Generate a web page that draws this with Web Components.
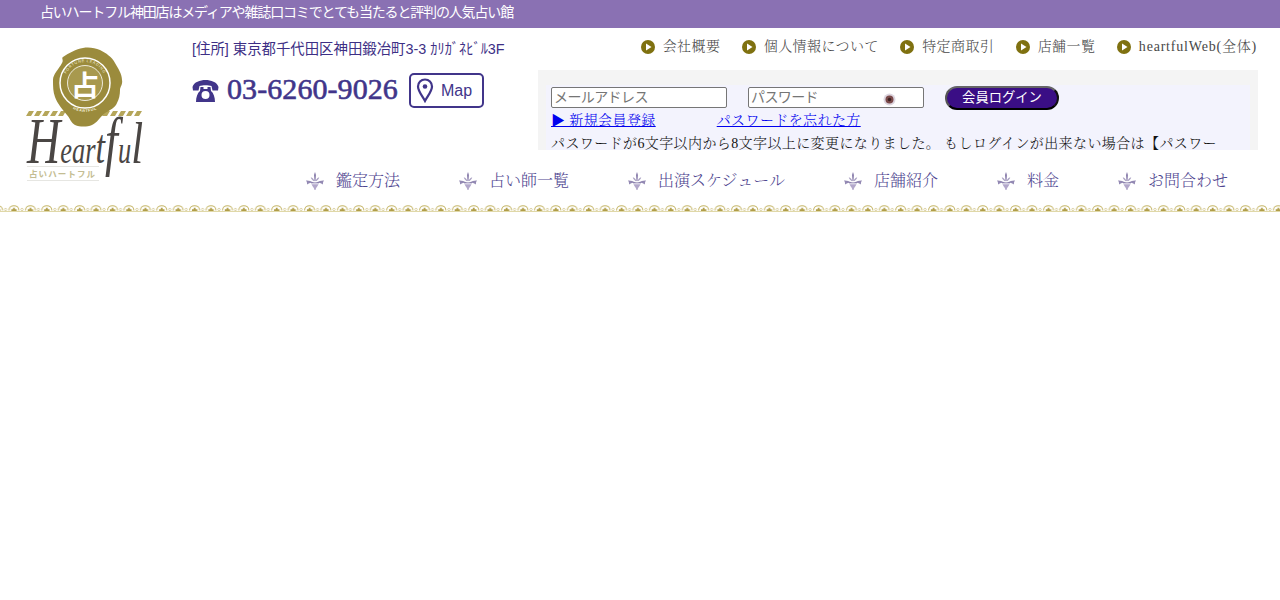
<!DOCTYPE html>
<html lang="ja"><head><meta charset="utf-8"><title>占いハートフル</title>
<style>
html,body{margin:0;padding:0;background:#fff;}
body{font-family:"Liberation Serif","Noto Serif CJK JP",serif;}
</style></head><body>
<site-page></site-page>
<script>
function def(name, html){
  customElements.define(name, class extends HTMLElement{
    constructor(){super();this.attachShadow({mode:'open'}).innerHTML=html;}
  });
}
const SERIF='"Liberation Serif","Noto Serif CJK JP",serif';
const SANS='"Liberation Sans","Noto Sans CJK JP",sans-serif';

def('top-bar',`<style>:host{display:block;height:28px;background:#8a71b3;color:#fff;font:14px/25px ${SANS};letter-spacing:-1.16px;padding-left:40px;}</style><slot></slot>`);

def('site-logo',`<style>:host{display:block;width:118px;height:136px;}svg{display:block;overflow:visible}</style>
<svg width="118" height="136" viewBox="0 0 118 136">
 <defs>
  <path id="ringTop" d="M38 35a21 21 0 0 1 42 0"/>
  <path id="ringBot" d="M34 39a25 25 0 0 0 50 0"/>
 </defs>
 <g fill="#b5a65a">
  ${[0,8,16,24,32,76,84,92,100,108].map(x=>`<path d="M${x+3} 63h5l-3 5h-5z"/>`).join('')}
 </g>
 <path d="M57 0C63-1 69 0 74 2C80 5 86 9 89 15C92 20 96 26 96 32C97 36 94 39 94 42C94 47 93 51 91 55C89 60 84 62 79 65C74 69 71 75 66 77C61 79 54 79 49 77C45 75 44 70 41 67C37 62 31 55 29 49C27 44 27 38 27 32C27 26 33 21 36 15C38 12 35 10 37 9C43 5 50 1 57 0Z" fill="#9b8b3c"/>
 <circle cx="59" cy="35" r="25" fill="none" stroke="#fff" stroke-width="1.500"/>
 <circle cx="59" cy="35" r="17.500" fill="#a8994e" stroke="#fff" stroke-width=".8"/>
 <text font-family="Liberation Sans" font-size="3.800" fill="#f4f0da" letter-spacing=".7"><textPath href="#ringTop" startOffset="50%" text-anchor="middle">FORTUNE LEADING</textPath></text>
 <text font-family="Liberation Sans" font-size="3.800" font-weight="700" fill="#f4f0da" letter-spacing=".6"><textPath href="#ringBot" startOffset="50%" text-anchor="middle">HEARTFUL</textPath></text>
 <text x="59" y="48" text-anchor="middle" font-family='"Noto Sans CJK JP",sans-serif' font-size="28" font-weight="700" fill="#fff">占</text>
 <text transform="translate(1,115) scale(1,1.200)" font-family="Liberation Serif" font-style="italic" font-size="31" fill="#4a4644" textLength="116" lengthAdjust="spacingAndGlyphs"><tspan font-size="54">H</tspan>ear<tspan font-size="40">t</tspan><tspan font-size="54">f</tspan>u<tspan font-size="50">l</tspan></text>
 <path d="M1 118h72v1H1zM1 132h72v1H1z" fill="#e6e6e2"/>
 <text x="3" y="129" font-family='"Noto Sans CJK JP",sans-serif' font-size="8.500" font-weight="700" fill="#c4bd92" letter-spacing="1.100">占いハートフル</text>
</svg>`);

def('shop-info',`<style>
:host{display:block;width:346px;color:#3d2f85;}
.addr{font:14.4px/20px ${SANS};margin:11px 0 0;white-space:nowrap}
.row{display:flex;align-items:center;margin-top:14px;height:35px}
.tel{font:400 30px/35px ${SERIF};-webkit-text-stroke:.6px #41358a;color:#41358a;margin-left:8px;padding-bottom:4px;white-space:nowrap;letter-spacing:.08px}
svg{display:block;flex:none}
.map{box-sizing:border-box;margin-left:11px;width:75px;height:35px;border:2px solid #41358a;border-radius:5px;display:flex;align-items:center;padding-left:5px;gap:7px;font:16px ${SANS};color:#41358a;background:#fff}
</style>
<div class="addr">[住所] 東京都千代田区神田鍛冶町3-3 ｶﾘｶﾞﾈﾋﾞﾙ3F</div>
<div class="row">
<svg width="27" height="22" viewBox="0 0 27 22"><path fill="#41358a" fill-rule="evenodd" d="M.5 7C2 2 8 0 13.500 0S25 2 26.500 7L26 10.500H20.500L19.500 6C16.500 5 10.500 5 7.500 6L6.500 10.500H1zM8.500 7h3v2h4V7h3l.5 4C21.500 13 23 17 23 22H4C4 17 5.500 13 8 11zM13.500 11a4 4 0 1 0 0 8 4 4 0 0 0 0-8z"/></svg>
<span class="tel">03-6260-9026</span>
<span class="map"><svg width="18" height="25" viewBox="0 0 18 25"><path fill="none" stroke="#41358a" stroke-width="2.200" d="M9 1.500c4 0 7 3 7 7 0 4.500-4 9-7 14.500C6 17.500 2 13 2 8.500c0-4 3-7 7-7z"/><circle cx="9" cy="8.500" r="2.300" fill="#41358a"/></svg>Map</span>
</div>`);

def('top-link',`<style>
:host{display:flex;align-items:center;gap:8px;font:300 14px/18px ${SERIF};letter-spacing:.4px;color:#484848;white-space:nowrap}
svg{display:block}
</style><svg width="14" height="14" viewBox="0 0 14 14"><circle cx="7" cy="7" r="7" fill="#7f7110"/><path d="M5 3.500 10.500 7 5 10.500z" fill="#fff"/></svg><slot></slot>`);

def('top-links',`<style>:host{display:flex;justify-content:flex-end;gap:21.500px;height:18px;margin-top:10px;margin-right:1px}</style><slot></slot>`);

def('login-box',`<style>
:host{display:block;box-sizing:border-box;height:80px;margin-top:14px;background:#f4f4f4;padding:15px 8px 0;overflow:hidden;font:300 14px/20px ${SERIF};letter-spacing:.4px;color:#111}
.in{background:#f3f3fd;padding:0 5px;height:100px}
.r1{display:flex;align-items:center;height:25px}
.f{position:relative;box-sizing:border-box;width:176px;height:21px;border:1px solid #767676;border-radius:2px;background:#fff;color:#757575;font:14px/19px ${SANS};padding-left:2px;letter-spacing:-.6px}
.f+.f{margin-left:21px}
.eye{position:absolute;left:134px;top:5px}
.btn{box-sizing:border-box;margin-left:21px;width:114px;height:24px;border-radius:12px;border:2px solid;border-color:#666 #111 #000 #555;background:#3a0e85;color:#fff;font:13.300px/20px ${SANS};letter-spacing:0;text-align:center}
.r2{display:flex;height:20px;margin-top:1px}
a{color:#00e;text-decoration:underline}
.p{margin:3px 0 0;white-space:nowrap}
</style>
<div class="in">
<div class="r1"><div class="f">メールアドレス</div><div class="f">パスワード<svg class="eye" width="13" height="13" viewBox="0 0 13 13"><circle cx="6.500" cy="6.500" r="6" fill="#ddd6e0"/><circle cx="6.500" cy="6.500" r="4" fill="#7a4a4a"/><circle cx="6.500" cy="6.500" r="1.700" fill="#3a1f1f"/></svg></div><div class="btn">会員ログイン</div></div>
<div class="r2"><a href="#">▶ 新規会員登録</a><a href="#" style="margin-left:61px">パスワードを忘れた方</a></div>
<p class="p">パスワードが6文字以内から8文字以上に変更になりました。 もしログインが出来ない場合は【パスワー</p>
</div>`);

def('nav-item',`<style>
:host{display:flex;align-items:center;gap:12px;font:300 16px/24px ${SERIF};color:#4f4690;white-space:nowrap}
svg{display:block}
</style><svg width="18" height="18" viewBox="0 0 18 18"><g fill="#6f6199"><path d="M9 0c.5 1.500 1 3 .7 4.500L9.400 9h-.8L8.300 4.500C8 3 8.500 1.500 9 0z"/><path d="M8.500 9C7.500 7 6.500 5.500 4.800 5.300 5 7 6.500 8.500 8 9.300zM9.500 9c1-2 2-3.500 3.700-3.700C13 7 11.500 8.500 10 9.300z" fill-opacity=".6"/><path d="M0 8.500c2.500-.3 5 .8 7.500 1.700v.5C5 10.700 2.500 11 1 12.500c.2-1.500 0-2.800-1-4zM18 8.500c-2.500-.3-5 .8-7.500 1.700v.5c2.500 0 5 .3 6.500 1.800-.2-1.500 0-2.800 1-4z" fill-opacity=".75"/><path d="M5 10.500h8v.8H5z"/></g><path d="M5.500 12c1.200.4 5.800.4 7 0-.3 2-2.500 3-3 6h-1c-.5-3-2.700-4-3-6z" fill="#b3a8cb"/></svg><slot></slot>`);

def('main-nav',`<style>:host{display:flex;justify-content:flex-end;gap:59px;padding:0 30px 0 0;height:24px;margin-top:19px}</style><slot></slot>`);

def('lace-border',`<style>:host{display:block;height:7px;margin-top:12px}svg{display:block;width:100%;height:7px}</style>
<svg height="7"><defs><pattern id="l" width="16.420" height="7" patternUnits="userSpaceOnUse" patternTransform="translate(7.500 0)">
<path d="M1.500 5.500C1.500 2.500 3.800 .7 6.500 .7S11.500 2.500 11.500 5.500" fill="none" stroke="#c4b464" stroke-width="1"/>
<path d="M3.800 4.200h5.400v1.800H3.800zM5.600 2.800h1.800v1.400H5.600z" fill="#b09d48"/>
<circle cx="14.500" cy="4.500" r="1.200" fill="none" stroke="#cfc388" stroke-width=".7"/>
</pattern></defs><rect width="100%" height="6" fill="url(#l)"/><rect y="6" width="100%" height="1" fill="#e0d8a8"/></svg>`);

def('site-header',`<style>
:host{display:grid;grid-template-columns:192px 1fr;padding-right:22px}
.logo{padding:20px 0 0 26px}
.top{display:flex}
.r{flex:1;min-width:0}
</style>
<div class="logo"><site-logo></site-logo></div>
<div><div class="top"><shop-info></shop-info><div class="r"><slot name="links"></slot><login-box></login-box></div></div><slot name="nav"></slot></div>`);

def('site-page',`<style>:host{display:block}</style>
<top-bar>占いハートフル神田店はメディアや雑誌口コミでとても当たると評判の人気占い館</top-bar>
<site-header>
<top-links slot="links"><top-link>会社概要</top-link><top-link>個人情報について</top-link><top-link>特定商取引</top-link><top-link>店舗一覧</top-link><top-link style="letter-spacing:.8px">heartfulWeb(全体)</top-link></top-links>
<main-nav slot="nav"><nav-item>鑑定方法</nav-item><nav-item>占い師一覧</nav-item><nav-item>出演スケジュール</nav-item><nav-item>店舗紹介</nav-item><nav-item>料金</nav-item><nav-item>お問合わせ</nav-item></main-nav>
</site-header>
<lace-border></lace-border>`);
</script>
</body></html>
